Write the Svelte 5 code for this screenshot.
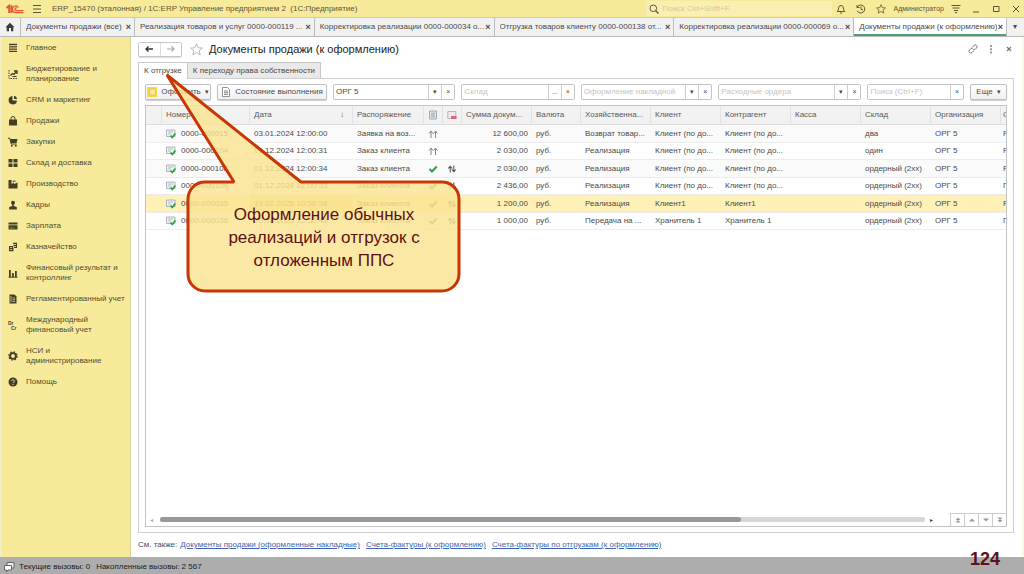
<script>
  const windows = [
    { title: 'Документы продажи (все)', size: 'short' },
    { title: 'Реализация товаров и услуг 0000-000119 ...', size: 'long' },
    { title: 'Корректировка реализации 0000-000034 о...', size: 'long' },
    { title: 'Отгрузка товаров клиенту 0000-000138 от...', size: 'long' },
    { title: 'Корректировка реализации 0000-000069 о...', size: 'long' },
    { title: 'Документы продажи (к оформлению)', size: 'active' }
  ];

  const sections = [
    { icon: 'menu', label: 'Главное' },
    { icon: 'plan', label: 'Бюджетирование и планирование' },
    { icon: 'pie', label: 'CRM и маркетинг' },
    { icon: 'bag', label: 'Продажи' },
    { icon: 'cart', label: 'Закупки' },
    { icon: 'grid', label: 'Склад и доставка' },
    { icon: 'factory', label: 'Производство' },
    { icon: 'person', label: 'Кадры' },
    { icon: 'card', label: 'Зарплата' },
    { icon: 'coins', label: 'Казначейство' },
    { icon: 'bars', label: 'Финансовый результат и контроллинг' },
    { icon: 'book', label: 'Регламентированный учет' },
    { icon: 'drcr', label: 'Международный финансовый учет' },
    { icon: 'gear', label: 'НСИ и администрирование' },
    { icon: 'help', label: 'Помощь' }
  ];

  const filters = [
    { name: 'org', label: 'Организация', value: 'ОРГ 5', hint: '', pick: '▾' },
    { name: 'store', label: 'Склад', value: '', hint: 'Склад', pick: '...' },
    { name: 'invoice', label: 'Оформление накладной', value: '', hint: 'Оформление накладной', pick: '▾' },
    { name: 'orders', label: 'Расходные ордера', value: '', hint: 'Расходные ордера', pick: '▾' },
    { name: 'search', label: 'Поиск', value: '', hint: 'Поиск (Ctrl+F)', pick: '' }
  ];

  const rows = [
    { no: '0000-000015', date: '03.01.2024 12:00:00', order: 'Заявка на воз...', done: false, moved: false, sum: '12 600,00', op: 'Возврат товар...', client: 'Клиент (по до...', partner: 'Клиент (по до...', store: 'два', last: 'Р' },
    { no: '0000-000104', date: '01.12.2024 12:00:31', order: 'Заказ клиента', done: false, moved: false, sum: '2 030,00', op: 'Реализация', client: 'Клиент (по до...', partner: 'Клиент (по до...', store: 'один', last: 'Р' },
    { no: '0000-000108', date: '01.12.2024 12:00:34', order: 'Заказ клиента', done: true, moved: true, sum: '2 030,00', op: 'Реализация', client: 'Клиент (по до...', partner: 'Клиент (по до...', store: 'ордерный (2хх)', last: 'Р' },
    { no: '0000-000109', date: '01.12.2024 12:00:35', order: 'Заказ клиента', done: true, moved: true, sum: '2 436,00', op: 'Реализация', client: 'Клиент (по до...', partner: 'Клиент (по до...', store: 'ордерный (2хх)', last: 'Г' },
    { no: '0000-000035', date: '19.02.2025 10:56:38', order: 'Заказ клиента', done: true, moved: true, sum: '1 200,00', op: 'Реализация', client: 'Клиент1', partner: 'Клиент1', store: 'ордерный (2хх)', last: 'Р', selected: true },
    { no: '0000-000036', date: '20.02.2025 12:50:48', order: 'Заказ клиента', done: true, moved: true, sum: '1 000,00', op: 'Передача на ...', client: 'Хранитель 1', partner: 'Хранитель 1', store: 'ордерный (2хх)', last: 'Г' }
  ];

  const links = [
    'Документы продажи (оформленные накладные)',
    'Счета-фактуры (к оформлению)',
    'Счета-фактуры по отгрузкам (к оформлению)'
  ];
</script>

{#snippet sectionIcon(name)}
  <svg class="s-icon" viewBox="0 0 10 10" aria-hidden="true">
    {#if name === 'menu'}
      <path d="M1 1.5h8M1 3.8h8M1 6.1h8M1 8.4h8" stroke="currentColor" stroke-width="1.3" />
    {:else if name === 'plan'}
      <path d="M1 1v8.500h8" fill="none" stroke="currentColor" stroke-dasharray="1.500 1" />
      <path d="M2.500 6.500l2-2 1.500 1 2.500-3M6 2h3v3" fill="none" stroke="currentColor" stroke-width="1.300" />
      <path d="M4.500 7.500h4" stroke="currentColor" />
    {:else if name === 'pie'}
      <path d="M4.500 1v4.500H9A4.200 4.200 0 1 1 4.500 1z" fill="currentColor" />
      <path d="M6 .8A4 4 0 0 1 9.200 4H6z" fill="currentColor" />
    {:else if name === 'bag'}
      <path d="M1 3.500h8V9.500H1z" fill="currentColor" />
      <path d="M3 5V2.500a2 2 0 0 1 4 0V5" fill="none" stroke="currentColor" />
    {:else if name === 'cart'}
      <path d="M2 2h7.500L8.500 6H3z" fill="currentColor" />
      <path d="M0 1.200h1.800L3.200 7h5.500" fill="none" stroke="currentColor" />
      <circle cx="3.800" cy="8.700" r="1" fill="currentColor" /><circle cx="7.800" cy="8.700" r="1" fill="currentColor" />
    {:else if name === 'grid'}
      <path d="M.5 1h4v3.500h-4zM5.500 1h4v3.500h-4zM.5 5.500h4V9h-4zM5.500 5.500h4V9h-4z" fill="currentColor" />
    {:else if name === 'factory'}
      <path d="M.5 9.500V1h3v4l2.500-1.500V5L9.500 3.500v6z" fill="currentColor" />
      <path d="M4.500 2.200h3" stroke="currentColor" />
    {:else if name === 'person'}
      <circle cx="5" cy="2.800" r="2" fill="currentColor" />
      <path d="M4.200 4h1.600v2l3 1v2.500H1.200V7l3-1z" fill="currentColor" />
    {:else if name === 'card'}
      <path d="M.5 1.500h9v2h-9zM.5 4.300h9v4.200h-9z" fill="currentColor" />
      <path d="M1.500 7h5" stroke="#f8ea9b" stroke-width=".4" />
    {:else if name === 'coins'}
      <path d="M5 .8h4v1.300H5zM5.500 2.800h3.500v1.300H5.500zM6 4.800h3v1.300H6zM1 4h3.800v1.300H1zM1 6h4.500v1.300H1zM1 8h4.500v1.300H1z" fill="currentColor" />
      <path d="M8.500 1v5M1.500 4v5M4.700 4v5" stroke="currentColor" />
    {:else if name === 'bars'}
      <path d="M1 2h1.800v7H1zM4 5h1.800v4H4zM7 3h1.800v6H7z" fill="currentColor" /><path d="M.5 9.200h9" stroke="currentColor" />
    {:else if name === 'book'}
      <path d="M1.500 .5h5l2 2v7h-7z" fill="currentColor" />
      <path d="M3 2v6M4.500 4h2.500M4.500 5.700h2.500M4.500 7.400h2.500" stroke="#f8ea9b" stroke-width=".7" />
    {:else if name === 'drcr'}
      <text x="0" y="4.600" class="mini">Dr</text><text x="3" y="9.600" class="mini">Cr</text>
    {:else if name === 'gear'}
      <circle cx="5" cy="5" r="2.900" fill="none" stroke="currentColor" stroke-width="1.900" />
      <circle cx="5" cy="5" r="4.100" fill="none" stroke="currentColor" stroke-width="1.300" stroke-dasharray="1.600 1.620" />
    {:else}
      <circle cx="5" cy="5" r="4.500" fill="currentColor" />
      <path d="M3.700 4a1.300 1.300 0 1 1 2 1.100Q5 5.500 5 6.200M5 7v1" fill="none" stroke="#f8ea9b" stroke-width=".9" />
    {/if}
  </svg>
{/snippet}

{#snippet starIcon()}
  <svg viewBox="0 0 12 12" aria-hidden="true"><path d="M6 .8l1.500 3.600 3.900.3-3 2.500 1 3.800L6 8.900 2.600 11l1-3.800-3-2.500 3.900-.3z" fill="none" stroke="currentColor" stroke-width=".9" /></svg>
{/snippet}

<div class="app">
  <header class="titlebar">
    <svg class="logo" viewBox="0 0 18 10" aria-label="1C" role="img">
      <path d="M.5 4L3.200 1.800V9M5.500 1.200V9" fill="none" stroke="#e2582f" stroke-width="2" />
      <path d="M12.500 3.500A3.300 3.300 0 1 0 10 8.600H17.500M11.200 4.300A1.400 1.400 0 1 0 10 6.700H17.500" fill="none" stroke="#e2582f" stroke-width="1.200" />
    </svg>
    <button class="bare" aria-label="Меню">
      <svg viewBox="0 0 10 10"><path d="M1 1.500h8M1 5h8M1 8.500h8" stroke="currentColor" /></svg>
    </button>
    <span class="app-name">ERP_15470 (эталонная) / 1С:ERP Управление предприятием 2 &nbsp;(1С:Предприятие)</span>
    <label class="global-search">
      <svg viewBox="0 0 10 10" aria-hidden="true"><circle cx="4.300" cy="4.300" r="3.300" fill="none" stroke="currentColor" /><path d="M6.700 6.700L9.500 9.500" stroke="currentColor" stroke-width="1.300" /></svg>
      <input type="text" aria-label="Поиск" placeholder="Поиск Ctrl+Shift+F" />
    </label>
    <div class="system">
      <button class="bare" aria-label="Уведомления"><svg viewBox="0 0 10 10"><path d="M1.200 7.500Q2.500 6.500 2.600 4 2.800 1.500 5 1.500T7.400 4Q7.500 6.500 8.800 7.500zM4 9h2" fill="none" stroke="currentColor" /></svg></button>
      <button class="bare" aria-label="История"><svg viewBox="0 0 10 10"><path d="M1.200 3.200A4 4 0 1 1 1.200 6.800M1 1v2.500h2.500M5 2.500V5.200L7 6.200" fill="none" stroke="currentColor" /></svg></button>
      <button class="bare" aria-label="Избранное">{@render starIcon()}</button>
      <span class="user">Администратор</span>
      <button class="bare" aria-label="Настройки"><svg viewBox="0 0 10 10"><path d="M.5 1.500h9M1.500 4h7M3 6.500h4" stroke="currentColor" /><path d="M3.500 8h3L5 9.500z" fill="currentColor" /></svg></button>
      <button class="bare" aria-label="Свернуть"><svg viewBox="0 0 10 10"><path d="M2 8h6" stroke="currentColor" /></svg></button>
      <button class="bare" aria-label="Развернуть"><svg viewBox="0 0 10 10"><path d="M2.500 2.500h5.500v5h-5.500z" fill="none" stroke="currentColor" /></svg></button>
      <button class="bare" aria-label="Закрыть"><svg viewBox="0 0 10 10"><path d="M2 2l6 6M8 2L2 8" stroke="currentColor" /></svg></button>
    </div>
  </header>

  <nav class="windows" aria-label="Открытые окна">
    <button class="home" aria-label="Начальная страница"><svg viewBox="0 0 10 10"><path d="M5 .8L9.500 5.200H8.300V9.200H6V6H4v3.200H1.700V5.200H.5z" fill="currentColor" /></svg></button>
    {#each windows as w}
      <div class="window {w.size}">
        <button class="window-title">{w.title}</button>
        <button class="close" aria-label="Закрыть вкладку">×</button>
      </div>
    {/each}
    <button class="more-windows" aria-label="Все окна">▾</button>
  </nav>

  <div class="body">
    <aside class="sidebar">
      {#each sections as s}
        <a class="section" href="#section">{@render sectionIcon(s.icon)}<span>{s.label}</span></a>
      {/each}
    </aside>

    <main class="page">
      <div class="heading">
        <div class="history">
          <button aria-label="Назад"><svg viewBox="0 0 10 8"><path d="M9 4H2M4.500 1.500L2 4l2.500 2.500" fill="none" stroke="currentColor" stroke-width="1.400" /></svg></button>
          <button class="off" aria-label="Вперед"><svg viewBox="0 0 10 8"><path d="M1 4h7M5.500 1.500L8 4 5.500 6.500" fill="none" stroke="currentColor" stroke-width="1.200" /></svg></button>
        </div>
        <button class="fav" aria-label="В избранное">{@render starIcon()}</button>
        <h1>Документы продажи (к оформлению)</h1>
        <div class="page-tools">
          <button class="bare" aria-label="Ссылка"><svg viewBox="0 0 10 10"><path d="M4.500 3l1.500-1.500a1.700 1.700 0 0 1 2.500 2.500L7 5.500a1.700 1.700 0 0 1-2 .2M5.500 7L4 8.500A1.700 1.700 0 0 1 1.500 6L3 4.500a1.700 1.700 0 0 1 2-.2" fill="none" stroke="currentColor" /></svg></button>
          <button class="bare" aria-label="Еще"><svg viewBox="0 0 10 10"><path d="M5 1v2M5 4.200v2M5 7.400v2" stroke="currentColor" stroke-width="1.400" /></svg></button>
          <button class="bare" aria-label="Закрыть"><svg viewBox="0 0 10 10"><path d="M3 3l4 4M7 3L3 7" stroke="currentColor" stroke-width="1.200" /></svg></button>
        </div>
      </div>

      <div class="tabs" role="tablist">
        <button role="tab" aria-selected="true" class="tab on">К отгрузке</button>
        <button role="tab" aria-selected="false" class="tab">К переходу права собственности</button>
      </div>

      <section class="panel">
        <div class="toolbar">
          <button class="cmd issue">
            <svg viewBox="0 0 10 10" aria-hidden="true"><path d="M0 0h10v10H0z" fill="#f7d84f" /><path d="M3 2h4l1.500 1.500V8H2.500z" fill="#fbeaa0" stroke="#d9b53a" stroke-width=".6" /></svg>
            <span>Оформить</span><span class="caret">▾</span>
          </button>
          <button class="cmd state">
            <svg viewBox="0 0 10 10" aria-hidden="true"><path d="M1.500.5h5L8.500 2.500v7h-7z" fill="#fff" stroke="#777" stroke-width=".8" /><path d="M3 4h4M3 5.700h4M3 7.400h4" stroke="#777" stroke-width=".9" /></svg>
            <span>Состояние выполнения</span>
          </button>
          {#each filters as f}
            <div class="field {f.name}">
              <input type="text" aria-label={f.label} value={f.value} placeholder={f.hint} />
              {#if f.pick}<button aria-label="Выбрать">{f.pick}</button>{/if}
              <button aria-label="Очистить">×</button>
            </div>
          {/each}
          <button class="cmd more"><span>Еще</span><span class="caret">▾</span></button>
        </div>

        <div class="list">
          <table>
            <colgroup>
              <col class="c-mark" /><col class="c-no" /><col class="c-date" /><col class="c-order" />
              <col class="c-flag" /><col class="c-flag" /><col class="c-text" /><col class="c-cur" />
              <col class="c-text" /><col class="c-text" /><col class="c-text" /><col class="c-text" />
              <col class="c-text" /><col class="c-text" /><col />
            </colgroup>
            <thead>
              <tr>
                <th></th>
                <th>Номер</th>
                <th><span class="sorted">Дата<span>↓</span></span></th>
                <th>Распоряжение</th>
                <th class="flag"><svg viewBox="0 0 10 10" aria-label="Накладная" role="img"><path d="M1.500 1h7v8h-7z" fill="#e3e7ea" stroke="#9aa3aa" stroke-width=".9" /><path d="M3 3.200h4M3 5h4M3 6.800h4" stroke="#8a949c" stroke-width=".8" /></svg></th>
                <th class="flag"><svg viewBox="0 0 10 10" aria-label="Ордер" role="img"><path d="M.8 1.500h8v7h-8z" fill="#f2e9ea" stroke="#b3a3a6" stroke-width=".8" /><path d="M4 6h5.500v3H4z" fill="#d9667a" /></svg></th>
                <th>Сумма докум...</th>
                <th>Валюта</th>
                <th>Хозяйственна...</th>
                <th>Клиент</th>
                <th>Контрагент</th>
                <th>Касса</th>
                <th>Склад</th>
                <th>Организация</th>
                <th>С</th>
              </tr>
            </thead>
            <tbody>
              {#each rows as r}
                <tr class:selected={r.selected}>
                  <td></td>
                  <td>
                    <span class="doc">
                      <svg viewBox="0 0 10 10" aria-hidden="true"><path d="M.5 1h8.500v6.500H.5z" fill="#eef1f3" stroke="#9aa6ad" stroke-width=".8" /><path d="M2 3h5M2 5h3" stroke="#a9b4ba" stroke-width=".8" /><path d="M4.500 6.500l1.800 2L9.300 4.500" fill="none" stroke="#2f9e3f" stroke-width="1.700" /></svg>
                      {r.no}
                    </span>
                  </td>
                  <td class:current={r.selected}>{r.date}</td>
                  <td>{r.order}</td>
                  <td class="flag">
                    {#if r.done}
                      <svg viewBox="0 0 10 10" aria-label="Оформлено" role="img"><path d="M1.500 5l2.500 2.500L8.800 2.500" fill="none" stroke="#2fa04a" stroke-width="2" /></svg>
                    {:else}
                      <svg viewBox="0 0 10 10" aria-label="К оформлению" role="img"><path d="M3 9V3M1 4.500L3 2l2 2.500M7.500 9V3M5.500 4.500l2-2.500 2 2.500" fill="none" stroke="#777" stroke-width=".9" /></svg>
                    {/if}
                  </td>
                  <td class="flag">
                    {#if r.moved}
                      <svg viewBox="0 0 10 10" aria-label="Отгружается" role="img"><path d="M3.200 8.500V2.500M1.200 4.500l2-2.200 2 2.200M6.800 1.500v6M4.800 5.500l2 2.200 2-2.200" fill="none" stroke="#555" stroke-width="1.100" /></svg>
                    {/if}
                  </td>
                  <td class="sum">{r.sum}</td>
                  <td>руб.</td>
                  <td>{r.op}</td>
                  <td>{r.client}</td>
                  <td>{r.partner}</td>
                  <td></td>
                  <td>{r.store}</td>
                  <td>ОРГ 5</td>
                  <td>{r.last}</td>
                </tr>
              {/each}
            </tbody>
          </table>
          <div class="scroll">
            <span class="dot">◂</span>
            <div class="track"><div class="thumb"></div></div>
            <span class="dot dark">▸</span>
            <div class="pager">
              <button aria-label="В начало"><svg viewBox="0 0 8 8"><path d="M1.500 4L4 1.500 6.500 4zM1.500 6.500L4 4l2.500 2.500z" fill="currentColor" /></svg></button>
              <button aria-label="Вверх"><svg viewBox="0 0 8 8"><path d="M1 5.500L4 2.500l3 3z" fill="currentColor" /></svg></button>
              <button aria-label="Вниз"><svg viewBox="0 0 8 8"><path d="M1 2.500h6l-3 3z" fill="currentColor" /></svg></button>
              <button aria-label="В конец"><svg viewBox="0 0 8 8"><path d="M1.500 1.500h5L4 4zM1.500 4h5L4 6.500z" fill="currentColor" /></svg></button>
            </div>
          </div>
        </div>
      </section>

      <footer class="see-also">
        <span>См. также:</span>
        {#each links as l}<a href="#related">{l}</a>{/each}
      </footer>
    </main>
  </div>

  <div class="status">
    <svg viewBox="0 0 12 12" aria-hidden="true"><path d="M4 1.500h7v5.500H4z" fill="#eee" stroke="#666" /><path d="M1.500 4.500h7V9H5L3.500 11V9h-2z" fill="#fff" stroke="#666" /></svg>
    <span>Текущие вызовы: 0</span><span>Накопленные вызовы: 2 567</span>
  </div>

  <div class="callout">
    <svg viewBox="0 0 300 224" aria-hidden="true">
      <path d="M5 5L139 112H280A17 17 0 0 1 297 129V204A17 17 0 0 1 280 221H43A17 17 0 0 1 26 204V129A17 17 0 0 1 43 112H72Z" />
    </svg>
    <p>Оформление обычных реализаций и отгрузок с отложенным ППС</p>
  </div>
  <strong class="slide-no">124</strong>
</div>

<style>
  :global(body) { margin: 0; background: #fff; }
  .app {
    position: relative;
    display: flex;
    flex-direction: column;
    min-height: 100vh;
    overflow: hidden;
    box-sizing: border-box;
    font-family: "Liberation Sans", Arial, sans-serif;
    font-size: 8px;
    line-height: 10px;
    color: #4a4a4a;
  }
  .app :global(*) { box-sizing: border-box; }
  svg { display: block; flex: none; }
  button, input { font: inherit; color: inherit; margin: 0; padding: 0; border: 0; background: none; }
  button { display: flex; align-items: center; justify-content: center; white-space: nowrap; }
  input { min-width: 0; width: 100%; outline: 0; }
  input::placeholder { color: #c4c4c4; opacity: 1; }
  .bare svg { width: 10px; height: 10px; }

  .titlebar { display: flex; align-items: center; height: 17px; padding: 0 3px 0 6px; background: #f8ea9b; color: #5c5635; }
  .logo { width: 18px; height: 10px; margin-right: 8px; }
  .app-name { margin-left: 10px; white-space: nowrap; }
  .global-search { display: flex; align-items: center; gap: 3px; width: 186px; height: 15px; margin-left: auto; margin-right: 4px; padding-left: 3px; background: #faefb0; }
  .global-search svg { width: 10px; height: 10px; }
  .global-search input::placeholder { color: #d6ca96; }
  .system { display: flex; align-items: center; gap: 10px; }
  .user { margin: 0 -3px; font-size: 7px; }

  .windows { display: flex; height: 20px; background: #f1f1f1; border-top: 1px solid #cfcbb4; border-bottom: 1px solid #b9b9b9; }
  .home { width: 20px; flex: none; color: #3c3c3c; }
  .home svg { width: 10px; height: 10px; }
  .window { display: flex; align-items: center; justify-content: space-between; padding: 0 3px 0 5px; border-left: 1px solid #bdbdbd; min-width: 0; }
  .window.short { flex: 114 1 114px; }
  .window.long { flex: 180 1 180px; }
  .window.active { flex: 153 1 153px; background: #fff; box-shadow: inset 0 -2px #4f9f78; }
  .window-title { overflow: hidden; }
  .close { font-size: 9px; font-weight: bold; }
  .more-windows { width: 18px; flex: none; border-left: 1px solid #bdbdbd; }

  .body { display: flex; flex: 1; }
  .sidebar { width: 131px; flex: none; padding: 1px 3px 0 8px; background: #f8ea9b; border-left: 2px solid #f3edc8; border-right: 1px solid #d9cf9a; color: #544d2a; }
  .section { display: flex; align-items: center; gap: 8px; padding: 5px 0 6px; color: inherit; text-decoration: none; }
  .s-icon { width: 10px; height: 10px; margin-left: -2px; color: #453f28; }
  .mini { font-size: 5px; font-weight: bold; fill: currentColor; }

  .page { display: flex; flex-direction: column; flex: 1; min-width: 0; padding: 0 8px 0 7px; border-right: 2px solid #faf7e6; }
  .heading { display: flex; align-items: center; height: 24px; }
  .history { display: flex; width: 44px; height: 15px; border: 1px solid #c6c6c6; border-radius: 2px; box-shadow: 0 1px 1px #ddd; }
  .history button { flex: 1; color: #333; }
  .history .off { color: #aaa; border-left: 1px solid #ddd; }
  .history svg { width: 10px; height: 8px; }
  .fav { margin: 0 6px 0 8px; color: #b5b5b5; }
  .fav svg { width: 13px; height: 13px; }
  h1 { margin: 0; font-size: 11px; line-height: 14px; font-weight: normal; color: #222; white-space: nowrap; }
  .page-tools { display: flex; gap: 8px; margin-left: auto; color: #777; }

  .tabs { display: flex; height: 17px; margin-top: 1px; }
  .tab { padding: 0 5px; border: 1px solid #c8c8c8; border-left: 0; background: #e9e9e9; }
  .tab.on { position: relative; z-index: 1; background: #fff; border-left: 1px solid #c8c8c8; border-bottom: 0; }

  .panel { display: flex; flex-direction: column; flex: 1; margin-top: -1px; padding: 5px 6px; border: 1px solid #cfcfcf; }
  .toolbar { display: flex; height: 16px; gap: 6px; margin-bottom: 5px; }
  .cmd { gap: 4px; border: 1px solid #c0c0c0; border-radius: 2px; background: linear-gradient(#fff, #f0f0f0); box-shadow: 0 1px 1px #ccc; flex: none; }
  .cmd svg { width: 10px; height: 10px; }
  .caret { font-size: 7px; }
  .issue { width: 66px; }
  .state { width: 110px; }
  .more { width: 37px; }
  .field { display: flex; min-width: 0; border: 1px solid #c4c4c4; border-radius: 2px; }
  .field input { padding-left: 2px; flex: 1; }
  .field button { width: 13px; flex: none; border-left: 1px solid #cfcfcf; font-size: 7px; }
  .org { flex: 123 1 123px; }
  .store { flex: 114 1 114px; }
  .invoice { flex: 132 1 132px; }
  .orders { flex: 144 1 144px; }
  .search { flex: 97 1 97px; }

  .list { display: flex; flex-direction: column; justify-content: space-between; flex: 1; border: 1px solid #c4c4c4; overflow: hidden; }
  table { width: 100%; table-layout: fixed; border-collapse: separate; border-spacing: 0; }
  .c-mark { width: 16px; }
  .c-no { width: 88px; }
  .c-date { width: 103px; }
  .c-order { width: 71px; }
  .c-flag { width: 19px; }
  .c-text { width: 70px; }
  .c-cur { width: 49px; }
  th, td { padding: 0 4px; text-align: left; font-weight: normal; white-space: nowrap; overflow: hidden; }
  th:last-child, td:last-child { padding: 0 0 0 2px; border-right: 0; }
  th { height: 19px; background: #f2f2f2; border-right: 1px solid #e2e2e2; border-bottom: 1px solid #dcdcdc; color: #5a5a5a; }
  td { height: 17px; border-bottom: 1px solid #ececec; }
  tr:nth-child(odd) td { height: 18px; background: #fafafa; }
  tr.selected:nth-child(odd) td { background: #fff0b8; }
  tr.selected:nth-child(odd) td.current { background: #ffe68a; }
  .sorted { display: flex; justify-content: space-between; padding-right: 4px; }
  .flag svg { width: 10px; height: 10px; }
  .sum { text-align: right; }
  .doc { display: flex; align-items: center; gap: 5px; }
  .doc svg { width: 10px; height: 10px; }

  .scroll { display: flex; align-items: center; height: 13px; padding-left: 4px; }
  .dot { width: 10px; font-size: 6px; color: #aaa; }
  .dot.dark { color: #444; margin-left: 5px; }
  .track { flex: 1; height: 5px; border-radius: 3px; background: #d6d6d6; }
  .thumb { width: 76%; height: 5px; border-radius: 3px; background: #989898; }
  .pager { display: flex; height: 13px; margin-left: 10px; border-top: 1px solid #ccc; color: #999; }
  .pager button { width: 14px; border-left: 1px solid #ccc; }
  .pager svg { width: 8px; height: 8px; }

  .see-also { display: flex; align-items: center; gap: 6px; height: 24px; white-space: nowrap; }
  .see-also span { margin-right: -3px; }
  .see-also a { color: #3d64b0; }

  .status { display: flex; align-items: center; gap: 6px; height: 17px; padding: 2px 3px 0; background: #adadad; color: #222; }
  .status svg { width: 12px; height: 12px; margin-right: -2px; }

  .callout { position: absolute; z-index: 2; left: 162px; top: 70px; width: 300px; height: 224px; }
  .callout svg { width: 300px; height: 224px; }
  .callout path { fill: #fae492; fill-opacity: .84; stroke: #c73604; stroke-width: 3; stroke-linejoin: bevel; }
  .callout p { position: absolute; left: 51px; right: 27px; top: 133px; margin: 0; text-align: center; font-size: 17px; line-height: 23px; color: #5c1010; }
  .slide-no { position: absolute; z-index: 2; right: 24px; bottom: 4px; font-size: 18px; line-height: 22px; color: #5c1020; }
</style>
